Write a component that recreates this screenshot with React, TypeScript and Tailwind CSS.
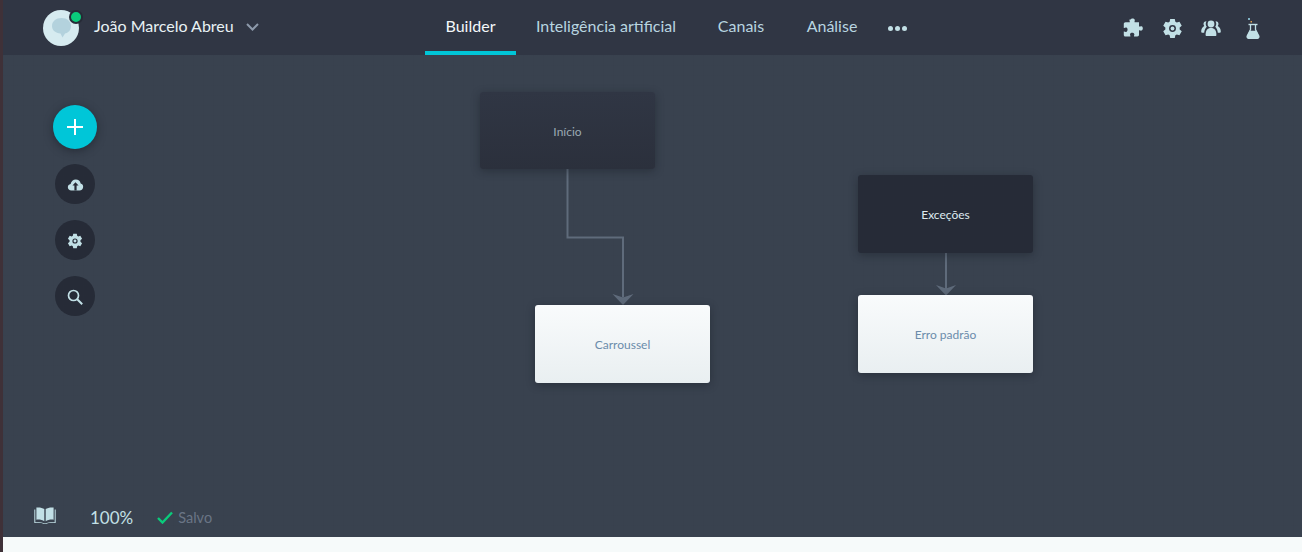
import React from "react";

const ink = "#c2e0e6";

function Puzzle() {
  return (
    <svg width="22" height="21" viewBox="0 0 22 21" fill={ink}>
      <path d="M7.500 1.600c.7-1.500 3.500-1.500 4.200 0 .4.900-.3 1.800-.1 2.700h4.400v4.200c.9.200 1.600-.6 2.500-.2 1.800.6 1.800 3.700 0 4.300-.9.300-1.600-.5-2.500-.3v4.500c0 1-.7 1.700-1.700 1.700h-3.300c-.2-.9.600-1.500.3-2.500-.5-1.600-3.700-1.600-4.200 0-.3 1 .5 1.600.3 2.500H2.300c-.9 0-1.500-.6-1.500-1.500v-3.400c.9-.2 1.500.6 2.500.3 1.700-.5 1.700-3.800 0-4.300-1-.3-1.600.5-2.500.3V6c0-1 .7-1.700 1.700-1.700h4.300c.2-.9-.7-1.800-.3-2.700z" />
    </svg>
  );
}

function Gear({ size = 22, fill = ink, hole = "#303644" }: { size?: number; fill?: string; hole?: string }) {
  return (
    <svg width={size} height={size} viewBox="0 0 22 22">
      <path
        fill={fill}
        d="M8.600 1h4.800l.6 2.900 1.500.9 2.800-1 2.400 4.200-2.200 1.900v2.200l2.200 1.900-2.400 4.200-2.800-1-1.500.9-.6 2.900H8.600L8 18.100l-1.500-.9-2.800 1-2.400-4.200 2.200-1.900V9.900L1.300 8l2.400-4.200 2.800 1L8 3.900z"
      />
      <circle cx="11" cy="11" r="3.600" fill={hole} />
      <circle cx="11" cy="11" r="2" fill={fill} />
    </svg>
  );
}

function Team() {
  return (
    <svg width="20" height="16" viewBox="0 0 20 16" fill={ink}>
      <circle cx="10" cy="4" r="3.400" />
      <path d="M4.600 15c0-4.400 1.800-7 5.400-7s5.400 2.600 5.400 7c0 .6-.4 1-1 1H5.600c-.6 0-1-.4-1-1z" />
      <path d="M5.300 1.200C3.500 1.200 2.500 2.500 2.500 4c0 .8.300 1.500.8 2C1.300 7 .2 9 .2 11.500c0 .9.500 1.300 1.200 1.300h1.800c.2-2.500 1-4.500 2.600-6-.8-1-1.200-2.200-1-3.500.1-.6.300-1.200.5-1.600z" />
      <path d="M14.700 1.200c1.800 0 2.800 1.300 2.800 2.800 0 .8-.3 1.500-.8 2 2 1 3.100 3 3.100 5.500 0 .9-.5 1.300-1.200 1.300h-1.800c-.2-2.500-1-4.500-2.600-6 .8-1 1.200-2.200 1-3.500-.1-.6-.3-1.200-.5-1.600z" />
    </svg>
  );
}

function Flask() {
  return (
    <svg width="14" height="21" viewBox="0 0 14 21">
      <rect x="2" y="0" width="2" height="2" fill="#7fb2c4" />
      <rect x="4.500" y="3" width="1.500" height="1.500" fill="#e0a050" />
      <path d="M2.500 6.500h9" stroke={ink} strokeWidth="1.400" />
      <path d="M4.500 7v4.500L1.200 18c-.4 1 .2 2.300 1.200 2.300h9.200c1 0 1.600-1.300 1.200-2.300L9.500 11.500V7" fill="none" stroke={ink} strokeWidth="1.300" />
      <path d="M3.600 12.800h6.800l2.600 5.700c.3.900-.2 1.800-1 1.800H2c-.8 0-1.300-.9-1-1.800z" fill={ink} />
    </svg>
  );
}

function Cloud() {
  return (
    <svg width="17" height="12" viewBox="0 0 17 13">
      <path fill={ink} d="M4 12.500C1.800 12.500.2 11 .2 9c0-1.800 1.300-3.200 3-3.500C3.800 2.500 6 .5 8.800.5c2.700 0 4.800 1.800 5.300 4.300 1.600.3 2.700 1.700 2.700 3.500 0 2.300-1.700 4.200-4 4.200z" />
      <path fill="#262b37" d="M8.500 3.500l3.300 3.500H9.700v5.500H7.300V7H5.200z" />
    </svg>
  );
}

function Book() {
  return (
    <svg className="mb-[4px]" width="22" height="17" viewBox="0 0 22 17" fill={ink}>
      <path d="M10.300 2C8.500.7 5.500.2 2.400.5v12.200c3-.3 6 .2 7.900 1.500z" />
      <path d="M11.700 2C13.500.7 16.500.2 19.600.5v12.200c-3-.3-6 .2-7.900 1.500z" />
      <path d="M.3 2.500V16c3.700-.6 7.500-.3 9.700.9h2c2.200-1.200 6-1.500 9.700-.9V2.500h-1v12.600c-3.500-.4-7 .2-9.700 1.500-2.700-1.300-6.200-1.900-9.700-1.500V2.500z" />
    </svg>
  );
}

function Node({ label, light, className, textClass }: { label: string; light?: boolean; className: string; textClass: string }) {
  return (
    <div
      className={`absolute flex w-[175px] items-center justify-center rounded-[3px] text-[12px] ${className} ${
        light ? "bg-gradient-to-b from-[#f9fbfc] to-[#e9eff1]" : ""
      } shadow-[0_2px_8px_rgba(20,24,32,0.4)]`}
    >
      <span className={textClass}>{label}</span>
    </div>
  );
}

function NavItem({ label, active, className }: { label: string; active?: boolean; className: string }) {
  return (
    <div className={`relative flex h-[55px] items-center justify-center pb-[3px] text-[16px] ${className} ${active ? "text-[#f3f8fa]" : "text-[#b8d5e0]"}`}>
      {label}
      {active && <div className="absolute inset-x-0 bottom-0 h-[4px] bg-[#00c6d8]" />}
    </div>
  );
}

export default function App() {
  return (
    <div className="flex h-[552px] w-[1302px] overflow-hidden bg-[#f6fafa] font-['Lato',sans-serif]">
      <div className="h-full w-[3px] shrink-0 bg-[#3f3138]" />
      <div className="flex h-full flex-1 flex-col">
        <header className="flex h-[55px] shrink-0 items-center bg-[#303644]">
          <div className="ml-[40px] flex w-[382px] items-center">
            <div className="relative h-[36px] w-[36px] rounded-full bg-[#d6ebf0]">
              <svg className="absolute left-[9px] top-[8px]" width="19" height="20" viewBox="0 0 19 20">
                <path fill="#b3d2dd" d="M9.500 0c5.500 0 9.500 3.500 9.500 8 0 4.500-3 7-6 7.500L10.500 19.500 8.500 15.500C3.500 15 0 12.500 0 8 0 3.500 4 0 9.500 0z" />
              </svg>
              <div className="absolute right-[-4px] top-0 h-[14px] w-[14px] rounded-full border-[2px] border-[#262b37] bg-[#0acb7b]" />
            </div>
            <span className="ml-[15px] pb-[3px] text-[16px] text-[#e8f2f5]">João Marcelo Abreu</span>
            <svg className="ml-[12px] mb-[2px]" width="13" height="8" viewBox="0 0 13 8" fill="none">
              <path d="M1 1l5.500 5.500L12 1" stroke="#8d9aab" strokeWidth="2" />
            </svg>
          </div>
          <nav className="flex items-center">
            <NavItem label="Builder" active className="w-[91px]" />
            <NavItem label="Inteligência artificial" className="ml-[19px] w-[142px]" />
            <NavItem label="Canais" className="ml-[40px] w-[48px]" />
            <NavItem label="Análise" className="ml-[41px] w-[52px]" />
            <div className="ml-[30px] flex gap-[2px] pt-[2px]">
              <span className="h-[5px] w-[5px] rounded-full bg-[#c2e0e6]" />
              <span className="h-[5px] w-[5px] rounded-full bg-[#c2e0e6]" />
              <span className="h-[5px] w-[5px] rounded-full bg-[#c2e0e6]" />
            </div>
          </nav>
          <div className="ml-[216px] flex items-center pt-[1px]">
            <Puzzle />
            <div className="ml-[17px]"><Gear size={21} /></div>
            <div className="ml-[18px]"><Team /></div>
            <div className="ml-[25px]"><Flask /></div>
          </div>
        </header>
        <main className="relative flex-1 bg-[#39424f] bg-[linear-gradient(rgba(48,54,68,0.08)_1px,transparent_1px),linear-gradient(90deg,rgba(48,54,68,0.08)_1px,transparent_1px)] bg-[length:10px_10px]">
          <div className="absolute left-[50px] top-[50px] flex h-[44px] w-[44px] items-center justify-center rounded-full bg-[#00c6d8] shadow-[0_2px_8px_rgba(20,24,32,0.5)]">
            <svg width="16" height="16" viewBox="0 0 16 16"><path d="M8 0v16M0 8h16" stroke="#fff" strokeWidth="2" /></svg>
          </div>
          <div className="absolute left-[52px] top-[109px] flex flex-col gap-[16px]">
            <div className="flex h-[40px] w-[40px] items-center justify-center rounded-full bg-[#262b37] pt-[2px]"><Cloud /></div>
            <div className="flex h-[40px] w-[40px] items-center justify-center rounded-full bg-[#262b37] pt-[2px]"><Gear size={16} hole="#262b37" /></div>
            <div className="flex h-[40px] w-[40px] items-center justify-center rounded-full bg-[#262b37] pt-[2px]">
              <svg width="16" height="16" viewBox="0 0 16 16" fill="none" stroke={ink} strokeWidth="1.700"><circle cx="6.500" cy="6.500" r="5" /><path d="M10 10l5.200 5.200" strokeWidth="2" /></svg>
            </div>
          </div>

          <svg className="absolute left-[550px] top-[114px]" width="90" height="136" viewBox="0 0 90 136" fill="none">
            <path d="M14.500 0v68.500h55.500v60" stroke="#5f6b7b" strokeWidth="2" />
            <path d="M59.500 125l10.500 3.500 10.500-3.500-10.500 11z" fill="#5f6b7b" />
          </svg>
          <svg className="absolute left-[928px] top-[198px]" width="30" height="45" viewBox="0 0 30 45" fill="none">
            <path d="M15 0v38" stroke="#5f6b7b" strokeWidth="2" />
            <path d="M5 32l10 3.500 10-3.500-10 10.500z" fill="#5f6b7b" />
          </svg>

          <Node label="Início" className="left-[477px] top-[37px] h-[77px] bg-gradient-to-b from-[#303644] to-[#2b303c] pt-[2px]" textClass="text-[#9ba9b3]" />
          <Node label="Exceções" className="left-[855px] top-[120px] h-[78px] bg-[#262b37] pt-[1px]" textClass="text-[#dfeaf0]" />
          <Node label="Carroussel" light className="left-[532px] top-[250px] h-[78px] pt-[1px]" textClass="text-[#6b8cab]" />
          <Node label="Erro padrão" light className="left-[855px] top-[240px] h-[78px] pt-[1px]" textClass="text-[#6b8cab]" />

          <div className="absolute bottom-0 left-[31px] flex h-[40px] items-center">
            <Book />
            <span className="ml-[34px] pt-[2px] text-[17px] text-[#c2e0e6]">100%</span>
            <svg className="ml-[24px] mt-[1px]" width="16" height="13" viewBox="0 0 16 13" fill="none"><path d="M1 7l4.500 4.500L15 1.500" stroke="#0acb7b" strokeWidth="2.400" /></svg>
            <span className="ml-[5px] pt-[1px] text-[14.5px] text-[#6a7585]">Salvo</span>
          </div>
        </main>
        <div className="h-[15px] shrink-0 bg-[#f6fafa]" />
      </div>
    </div>
  );
}
